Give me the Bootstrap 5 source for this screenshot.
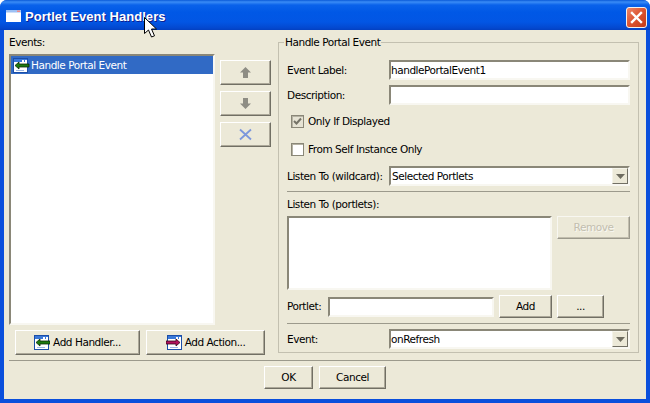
<!DOCTYPE html>
<html lang="en">
<head>
<meta charset="utf-8">
<title>Portlet Event Handlers</title>
<link href="https://cdn.jsdelivr.net/npm/bootstrap@5.3.0/dist/css/bootstrap.min.css" rel="stylesheet">
<style>
html,body{margin:0;padding:0;background:#fff;}
body{font-family:"DejaVu Sans",Verdana,sans-serif;font-size:10.5px;letter-spacing:-.45px;line-height:13px;color:#000;}
.xp-win{width:650px;height:403px;overflow:hidden;background:#0a4fdc;border-radius:7px 7px 0 0;position:relative;}
.xp-title{height:30px;flex:none;padding:2px 3px 0 6px;background:linear-gradient(180deg,#0a5ad8 0,#3a8cf6 2px,#0a62ea 5px,#0058e6 12px,#0256e4 22px,#0348cf 28px,#0340c0 30px);}
.xp-title-text{font-family:"Liberation Sans",Arial,sans-serif;font-size:13px;font-weight:700;color:#fff;text-shadow:1px 1px 0 #0f1f8f;letter-spacing:.05px;margin:1px 0 0 4px;}
.xp-close{width:21px;height:21px;flex:none;display:block;margin-left:auto;margin-top:2px;}
.xp-client{margin:0 4px 4px;background:#ece9d8;height:369px;padding:0 5px;}
.xp-left{width:262px;padding-top:6px;flex:none;}
.xp-list{background:#fff;border:2px solid;border-color:#8a8778 #f8f7f1 #f8f7f1 #8a8778;}
.xp-events{width:206px;height:271px;padding:0;margin-top:5px;}
.xp-row-sel{height:18px;background:#316ac5;color:#fff;padding-left:2px;gap:1px;}
.xp-btn.btn{--bs-btn-padding-x:0;--bs-btn-padding-y:0;--bs-btn-font-size:10.5px;--bs-btn-line-height:13px;--bs-btn-color:#000;--bs-btn-border-radius:0;background:#ece9d8;color:#000;letter-spacing:inherit;border:1px solid;border-color:#fff #716f64 #716f64 #fff;box-shadow:inset -1px -1px 0 #aca899;border-radius:0;flex:none;display:flex;align-items:center;justify-content:center;}
.xp-side{margin:11px 0 0 5px;width:51px;gap:6px;}
.xp-side .xp-btn{width:51px;height:25px;}
.xp-add{margin-top:5px;margin-left:6px;gap:6px;}
.xp-add .xp-btn{height:25px;gap:3px;}
.xp-w125{width:125px;}
.xp-w119{width:119px;}
.xp-field{width:361px;margin:6px 0 0 7px;padding:0 8px 3px;height:317px;border:1px solid #c3c0b0;flex:none;min-width:0;}
.xp-field legend{float:none;width:auto;font-size:10.5px;line-height:13px;padding:0 1px;margin:0 0 0 -3px;}
.xp-sep{height:1px;background:#9c9a8c;border:0;margin:0;opacity:1;}
.xp-lab{width:102px;flex:none;}
.xp-inp{background:#fff;border:2px solid;border-color:#8a8778 #f8f7f1 #f8f7f1 #8a8778;height:20px;font:inherit;letter-spacing:inherit;padding:0;color:#000;border-radius:0;outline:0;}
.xp-w241{width:241px;flex:none;}
.xp-h20{height:20px;}
.xp-m11{margin-top:11px;}
.xp-m5{margin-top:5px;}
.xp-m10{margin-top:10px;}
.xp-m15{margin-top:15px;}
.xp-m6{margin-top:6px;}
.xp-check-row{height:13px;padding-left:4px;gap:4px;}
.xp-check{appearance:none;-webkit-appearance:none;width:13px;height:13px;margin:0;flex:none;background:#fff;border:1px solid #8a8778;box-shadow:inset 1px 1px 0 #b5b2a3;}
.xp-check:checked{background:#e6e3d4 url("data:image/svg+xml,%3Csvg xmlns='http://www.w3.org/2000/svg' width='11' height='11'%3E%3Cpath d='M2 5l2.5 2.500L9 2.500' fill='none' stroke='%23757367' stroke-width='2'/%3E%3C/svg%3E") center no-repeat;}
.xp-selwrap{background:#fff;border:2px solid;border-color:#8a8778 #f8f7f1 #f8f7f1 #8a8778;height:20px;}
.xp-sel{appearance:none;-webkit-appearance:none;border:0;outline:0;background:#fff;font:inherit;letter-spacing:inherit;color:#000;flex:1 1 0;min-width:0;padding:0 0 0 1px;height:16px;}
.xp-sel-flush{padding:0;}
.xp-arrow{width:16px;height:16px;flex:none;background:#ece9d8;border:1px solid;border-color:#f5f4ea #716f64 #716f64 #f5f4ea;}
.xp-portlets{width:265px;height:74px;flex:none;}
.xp-remove.btn{width:73px;height:23px;color:#aca899;text-shadow:1px 1px 0 #fff;}
.xp-plab{width:41px;flex:none;}
.xp-pinp{width:166px;flex:none;}
.xp-add-btn.btn{width:53px;height:23px;margin-left:5px;}
.xp-more.btn{width:47px;height:23px;margin-left:5px;}
.xp-h23{height:23px;}
.xp-footer{margin-top:5px;}
.xp-foot-row{margin-top:5px;margin-left:255px;gap:6px;}
.xp-ok.btn{width:49px;height:23px;}
.xp-cancel.btn{width:67px;height:23px;}
.xp-cursor{position:absolute;left:144px;top:17px;width:13px;height:21px;}
</style>
</head>
<body>
<div class="xp-win d-flex flex-column">
  <div class="xp-title d-flex align-items-center">
    <svg width="15" height="12" viewBox="0 0 15 12"><rect x="0" y="0" width="15" height="12" fill="#fff"/><rect x="0" y="0" width="15" height="2.5" fill="#9cc0f4"/><rect x="11" y="0.5" width="3" height="1.5" fill="#e88"/></svg>
    <span class="xp-title-text">Portlet Event Handlers</span>
    <svg class="xp-close" viewBox="0 0 21 21"><defs><linearGradient id="cg" x1="0" y1="0" x2="1" y2="1"><stop offset="0" stop-color="#ee8a6c"/><stop offset=".5" stop-color="#dc5330"/><stop offset="1" stop-color="#c23a18"/></linearGradient></defs><rect x=".5" y=".5" width="20" height="20" rx="2.5" fill="url(#cg)" stroke="#f3f1ee"/><path d="M6 6l9 9M15 6l-9 9" stroke="#fff" stroke-width="2.4" stroke-linecap="square"/></svg>
  </div>
  <div class="xp-client">
    <div class="d-flex">
      <div class="xp-left">
        <div>Events:</div>
        <div class="d-flex">
          <div class="xp-list xp-events">
            <div class="xp-row-sel d-flex align-items-center">
              <svg width="17" height="15" viewBox="0 0 17 15"><rect x=".5" y=".5" width="14" height="14" fill="#fff" stroke="#1b4ea8"/><rect x="1" y="1" width="13" height="3" fill="#3a78d8"/><rect x="9" y="2" width="2" height="2" fill="#fff"/><rect x="12" y="2" width="2" height="2" fill="#fff"/><path d="M2 7.500L6 4v2h10v3H6v2z" fill="#1d7a10" stroke="#0a2a08" stroke-width=".8"/><rect x="3" y="12" width="8" height="1" fill="#9db8e6"/></svg>
              <span>Handle Portal Event</span>
            </div>
          </div>
          <div class="xp-side d-flex flex-column">
            <button type="button" class="btn xp-btn" aria-label="Up"><svg width="13" height="13" viewBox="0 0 13 13"><path d="M6.500 1L12 6.500H9V12H4V6.500H1z" fill="#8e8d84"/></svg></button>
            <button type="button" class="btn xp-btn" aria-label="Down"><svg width="13" height="13" viewBox="0 0 13 13"><path d="M6.500 12L1 6.500h3V1h5v5.500h3z" fill="#8e8d84"/></svg></button>
            <button type="button" class="btn xp-btn" aria-label="Delete"><svg width="13" height="13" viewBox="0 0 13 13"><path d="M1 1.500l11 10M12 1.500l-11 10" stroke="#7c97dc" stroke-width="1.800"/></svg></button>
          </div>
        </div>
        <div class="xp-add d-flex">
          <button type="button" class="btn xp-btn xp-w125"><svg width="16" height="15" viewBox="0 0 16 15"><rect x=".5" y=".5" width="14" height="14" fill="#fff" stroke="#1b4ea8"/><rect x="1" y="1" width="13" height="3" fill="#3a78d8"/><rect x="9" y="2" width="2" height="2" fill="#fff"/><rect x="12" y="2" width="2" height="2" fill="#fff"/><path d="M2 7.500L6 4v2h10v3H6v2z" fill="#1d7a10" stroke="#0a2a08" stroke-width=".8"/><rect x="3" y="12" width="8" height="1" fill="#9db8e6"/></svg><span>Add Handler...</span></button>
          <button type="button" class="btn xp-btn xp-w119"><svg width="16" height="15" viewBox="0 0 16 15"><rect x="1.500" y=".5" width="14" height="14" fill="#fff" stroke="#1b4ea8"/><rect x="2" y="1" width="13" height="3" fill="#3a78d8"/><rect x="10" y="2" width="2" height="2" fill="#fff"/><rect x="13" y="2" width="2" height="2" fill="#fff"/><path d="M14 7.500L10 4v2H0v3h10v2z" fill="#b0105c" stroke="#300818" stroke-width=".8"/><rect x="4" y="12" width="8" height="1" fill="#9db8e6"/></svg><span>Add Action...</span></button>
        </div>
      </div>
      <fieldset class="xp-field">
        <legend>Handle Portal Event</legend>
        <div class="d-flex align-items-center xp-m11 xp-h20"><label class="xp-lab" for="f1">Event Label:</label><input id="f1" class="xp-inp xp-w241" type="text" value="handlePortalEvent1"></div>
        <div class="d-flex align-items-center xp-m5 xp-h20"><label class="xp-lab" for="f2">Description:</label><input id="f2" class="xp-inp xp-w241" type="text"></div>
        <label class="d-flex align-items-center xp-check-row xp-m10"><input class="xp-check" type="checkbox" checked><span>Only If Displayed</span></label>
        <label class="d-flex align-items-center xp-check-row xp-m15"><input class="xp-check" type="checkbox"><span>From Self Instance Only</span></label>
        <div class="d-flex align-items-center xp-m10 xp-h20"><span class="xp-lab">Listen To (wildcard):</span>
          <div class="xp-selwrap xp-w241 d-flex"><select class="xp-sel"><option>Selected Portlets</option></select><span class="xp-arrow d-flex align-items-center justify-content-center"><svg width="9" height="5" viewBox="0 0 9 5"><path d="M0 0h9L4.500 5z" fill="#6e6c60"/></svg></span></div></div>
        <hr class="xp-sep xp-m5">
        <div class="xp-m6">Listen To (portlets):</div>
        <div class="d-flex xp-m5">
          <div class="xp-list xp-portlets"></div>
          <button type="button" class="btn xp-btn xp-remove ms-auto" disabled>Remove</button>
        </div>
        <div class="d-flex align-items-center xp-m5 xp-h23"><label class="xp-plab" for="f3">Portlet:</label><input id="f3" class="xp-inp xp-pinp" type="text"><button type="button" class="btn xp-btn xp-add-btn">Add</button><button type="button" class="btn xp-btn xp-more">...</button></div>
        <hr class="xp-sep xp-m5">
        <div class="d-flex align-items-center xp-m5 xp-h20"><span class="xp-lab">Event:</span>
          <div class="xp-selwrap xp-w241 d-flex"><select class="xp-sel xp-sel-flush"><option>onRefresh</option></select><span class="xp-arrow d-flex align-items-center justify-content-center"><svg width="9" height="5" viewBox="0 0 9 5"><path d="M0 0h9L4.500 5z" fill="#6e6c60"/></svg></span></div></div>
      </fieldset>
    </div>
    <hr class="xp-sep xp-footer">
    <div class="xp-foot-row d-flex">
      <button type="button" class="btn xp-btn xp-ok">OK</button>
      <button type="button" class="btn xp-btn xp-cancel">Cancel</button>
    </div>
  </div>
  <svg class="xp-cursor" viewBox="0 0 13 21"><path d="M.5.5v16l4-3.500 3 7 3-1.200-3-6.800h5z" fill="#fff" stroke="#000"/></svg>
</div>
<script src="https://cdn.jsdelivr.net/npm/bootstrap@5.3.0/dist/js/bootstrap.bundle.min.js"></script>
</body>
</html>
